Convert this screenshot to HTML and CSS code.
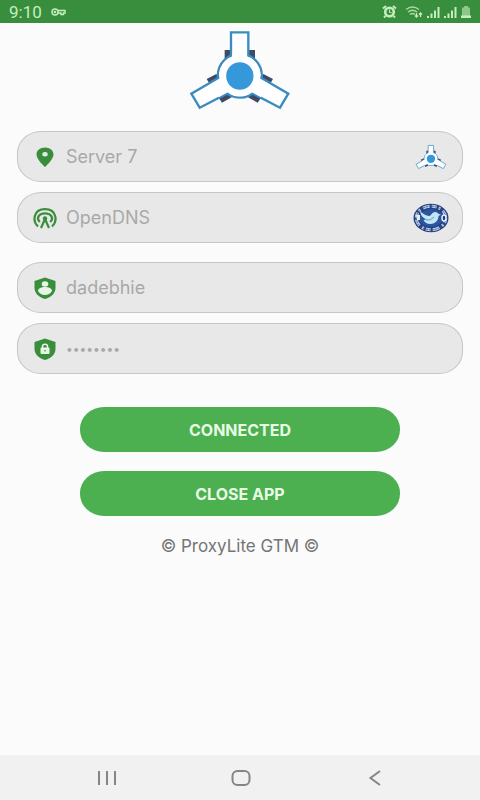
FILE: index.html
```html
<!DOCTYPE html>
<html lang="en">
<head>
<meta charset="utf-8">
<meta name="viewport" content="width=device-width, initial-scale=1">
<title>ProxyLite GTM</title>
<link rel="stylesheet" href="styles.css">
</head>
<body>
<svg class="defs" aria-hidden="true">
  <symbol id="logo" viewBox="24 21 312 246">
    <g fill="#3f4a66">
      <path d="M134 84h91v32h-91zM80 171l29-15 16 24-30 16zM114 224l30-18 11 20-29 16zM279 171l-29-15-16 24 30 16zM245 224l-30-18-11 20 29 16z"/>
    </g>
    <g fill="#fff" stroke="#3a8cc0" stroke-width="7">
      <circle cx="179.500" cy="161" r="66"/>
      <path d="M153 130V31h52v99zM134 157L34 215l25 42 108-56zM225 157l100 58-25 42-108-56z"/>
    </g>
    <circle cx="179.500" cy="161" r="62" fill="#fff"/>
    <path d="M157 90h44v40h-44zM96 184l36-20 24 40-40 22zM263 184l-36-20-24 40 40 22z" fill="#fff"/>
    <circle cx="179.500" cy="162" r="41" fill="#3498db"/>
  </symbol>
</svg>

<header class="status">
  <div class="status-group">
    <span class="clock">9:10</span>
    <svg width="15" height="8" viewBox="0 0 15 8" fill="none" stroke="currentColor" stroke-width="1.400"><circle cx="4" cy="4" r="3"/><circle cx="4" cy="4" r=".6"/><path d="M7 2.500h7v2.500h-1.500v1.500h-2.500V5H7"/></svg>
  </div>
  <div class="status-group status-right">
    <svg class="alarm" width="15" height="13" viewBox="0 0 15 13" fill="none" stroke="currentColor"><circle cx="7.500" cy="7" r="4.300" stroke-width="2.600"/><path d="M1 3.500L4 1M14 3.500L11 1M3.500 11L2 12.500M11.500 11l1.500 1.500" stroke-width="2"/><path d="M7.500 4.500V7.500h2"/></svg>
    <svg width="18" height="13" viewBox="0 0 18 13" fill="none" stroke="currentColor" stroke-width="1.300"><path d="M1 4.500Q7.500-.5 14 4.500M3 7q4.500-3.500 9 0M5 9.500q2.500-2 5 0" opacity=".8"/><path d="M11.500 8v4M10 10.500l1.500 1.500 1.500-1.500M15.500 12V8M14 9.500L15.500 8 17 9.500"/></svg>
    <svg width="13" height="12" viewBox="0 0 13 12" fill="currentColor"><path d="M0 10h2v2H0zM3.500 7.500h2V12h-2zM7 4.500h2V12H7zM10.500 1h2v11h-2z"/></svg>
    <svg width="13" height="12" viewBox="0 0 13 12" fill="currentColor"><path d="M0 10h2v2H0zM3.500 7.500h2V12h-2zM7 4.500h2V12H7zM10.500 1h2v11h-2z"/></svg>
    <svg width="10" height="12" viewBox="0 0 10 12" fill="currentColor"><path d="M3 0h4v1.500h2V10H1V1.500h2z" opacity=".6"/><path d="M0 9.500h10V12H0z"/></svg>
  </div>
</header>

<main class="content">
  <svg class="logo" role="img" aria-label="ProxyLite"><use href="#logo"/></svg>

  <form class="form">
    <div class="fields">
      <label class="field">
        <svg class="icon" viewBox="0 0 24 24"><path fill="currentColor" fill-rule="evenodd" d="M12 2.500C7 2.500 3.500 5.500 3.500 9.500 3.500 14.500 12 22 12 22s8.500-7.500 8.500-12.500C20.500 5.500 17 2.500 12 2.500zm0 4.500a2.700 2.200 0 1 1 0 4.400 2.700 2.200 0 1 1 0-4.400z"/></svg>
        <select class="control" aria-label="Server"><option>Server 7</option></select>
        <span class="badge"><svg class="mini-logo"><use href="#logo"/></svg></span>
      </label>
      <label class="field">
        <svg class="icon" viewBox="0 0 24 24" fill="none" stroke="currentColor" stroke-width="2.200"><path d="M5 20.500C-1 15 .5 3.200 12 3.200S25 15 19 20.500"/><path d="M6.800 16C3 12.500 5.500 7.300 12 7.300s9.200 5.200 5.200 8.700"/><circle cx="12" cy="12.500" r="2.200" fill="currentColor" stroke="none"/><path d="M12 13L8 22M12 13l4 9"/></svg>
        <select class="control" aria-label="DNS"><option>OpenDNS</option></select>
        <span class="badge">
          <svg width="36" height="30" viewBox="0 0 36 30">
            <ellipse cx="18" cy="15" rx="17.500" ry="14.300" fill="#253f80"/>
            <ellipse cx="18" cy="15" rx="14.700" ry="11.800" fill="none" stroke="#b9cbe4" stroke-width="3" stroke-dasharray="5 2 2 3 7 2"/>
            <ellipse cx="18" cy="15" rx="14.700" ry="11.800" fill="none" stroke="#3d5da0" stroke-width="1" stroke-dasharray="2 1"/>
            <ellipse cx="18" cy="15" rx="12" ry="9" fill="#2c559e"/>
            <path d="M7 8c3 3 6 4.500 9 5 2 .2 3-4 6-4 2 0 3 1 3.500 2l2.500.500-2.500 1.500c0 4-3 8-8 8-4 0-6-2-7-4l3-.5C9.500 15 7.500 12 7 8z" fill="#c4e5f6"/>
            <path d="M13 17q5 1 8-3" fill="none" stroke="#5b9bd0"/>
            <path d="M3 12h4v5H4z" fill="#e6eef8"/><ellipse cx="31" cy="15" rx="2" ry="3" fill="#253f80" stroke="#e6eef8" stroke-width="1.500"/>
          </svg>
        </span>
      </label>
    </div>

    <div class="fields">
      <label class="field">
        <svg class="icon" viewBox="0 0 24 24"><path fill="currentColor" d="M12 1.500L22.500 5v7c0 5-4 9-10.500 11C5.500 21 1.500 17 1.500 12V5z"/><ellipse cx="12" cy="8" rx="3.300" ry="2.800" fill="#e8f5e4"/><path d="M5 15c0-2.700 3.500-4 7-4s7 1.300 7 4c-1.500 2.500-4 4-7 4s-5.500-1.500-7-4z" fill="#e8f5e4"/></svg>
        <input class="control" type="text" aria-label="Username" value="dadebhie">
      </label>
      <label class="field">
        <svg class="icon" viewBox="0 0 24 24"><path fill="currentColor" d="M12 1.500L22.500 5v7c0 5-4 9-10.500 11C5.500 21 1.500 17 1.500 12V5z"/><rect x="7.500" y="10.500" width="9" height="6.500" rx="1" fill="#e8f5e4"/><path d="M9.500 11V9.500c0-3 5-3 5 0V11" fill="none" stroke="#e8f5e4" stroke-width="1.600"/><circle cx="12" cy="13.700" r=".8" fill="currentColor"/></svg>
        <input class="control password" type="password" aria-label="Password" value="password">
      </label>
    </div>

    <div class="actions">
      <button class="button" type="button">CONNECTED</button>
      <button class="button" type="button">CLOSE APP</button>
    </div>
  </form>
  <p class="copyright">© ProxyLite GTM ©</p>
</main>

<nav class="navbar">
  <button class="nav-button" type="button" aria-label="Recent apps"><svg width="20" height="18" viewBox="0 0 20 18" fill="none" stroke="currentColor" stroke-width="2"><path d="M2 2v14M10 2v14M18 2v14"/></svg></button>
  <button class="nav-button" type="button" aria-label="Home"><svg width="20" height="18" viewBox="0 0 20 18" fill="none" stroke="currentColor" stroke-width="2"><rect x="1.500" y="2" width="17" height="14" rx="5"/></svg></button>
  <button class="nav-button" type="button" aria-label="Back"><svg width="20" height="18" viewBox="0 0 20 18" fill="none" stroke="currentColor" stroke-width="2"><path d="M15 2L5.500 9l9.500 7"/></svg></button>
</nav>
</body>
</html>
```
FILE: styles.css
```css
* {
  box-sizing: border-box;
}

body {
  margin: 0;
  min-height: 100vh;
  display: flex;
  flex-direction: column;
  background: #fbfbfb;
  font-family: Inter, Roboto, sans-serif;
}

svg {
  display: block;
  flex: none;
}

.defs {
  position: absolute;
  width: 0;
  height: 0;
}

.status {
  display: flex;
  justify-content: space-between;
  align-items: center;
  height: 23px;
  padding: 0 9px;
  background: #388e3c;
  color: #c5eebf;
}

.status-group {
  display: flex;
  align-items: center;
  gap: 9px;
}

.status-right {
  gap: 4px;
}

.alarm {
  margin-right: 4px;
}

.clock {
  font-family: Roboto, sans-serif;
  font-size: 17px;
  line-height: 22px;
}

.content {
  flex: 1;
  display: flex;
  flex-direction: column;
  padding: 6px 17px 0;
}

.logo {
  width: 104px;
  height: 82px;
  align-self: center;
}

.form {
  display: flex;
  flex-direction: column;
  gap: 19px;
  margin-top: 20px;
}

.fields {
  display: flex;
  flex-direction: column;
  gap: 10px;
}

.field {
  display: flex;
  align-items: center;
  height: 51px;
  padding: 0 13px 0 15px;
  border: 1px solid #c6c6c6;
  border-radius: 24px / 22px;
  background: #e8e8e8;
}

.icon {
  width: 24px;
  height: 24px;
  color: #388e3c;
}

.control {
  flex: 1;
  min-width: 0;
  margin: 0 0 0 9px;
  padding: 0;
  border: 0;
  outline: 0;
  appearance: none;
  background: transparent;
  color: #a8a8a8;
  font-family: inherit;
  font-size: 18px;
  line-height: 24px;
}

.password {
  font-size: 12px;
}

.badge {
  display: flex;
  justify-content: center;
  width: 36px;
}

.mini-logo {
  width: 32px;
  height: 26px;
}

.actions {
  display: flex;
  flex-direction: column;
  gap: 19px;
  padding: 14px 63px 0;
}

.button {
  height: 45px;
  padding: 0;
  border: 0;
  border-radius: 24px / 22px;
  background: #4caf50;
  color: #e9fbe4;
  font-family: inherit;
  font-size: 16px;
  font-weight: 700;
}

.copyright {
  margin: 18px 0;
  color: #757575;
  font-size: 17px;
  line-height: 24px;
  text-align: center;
}

.navbar {
  display: flex;
  justify-content: space-around;
  align-items: center;
  height: 45px;
  padding: 0 38px 0 40px;
  background: #f1f1f1;
}

.nav-button {
  padding: 8px;
  border: 0;
  background: transparent;
  color: #858585;
}
```
